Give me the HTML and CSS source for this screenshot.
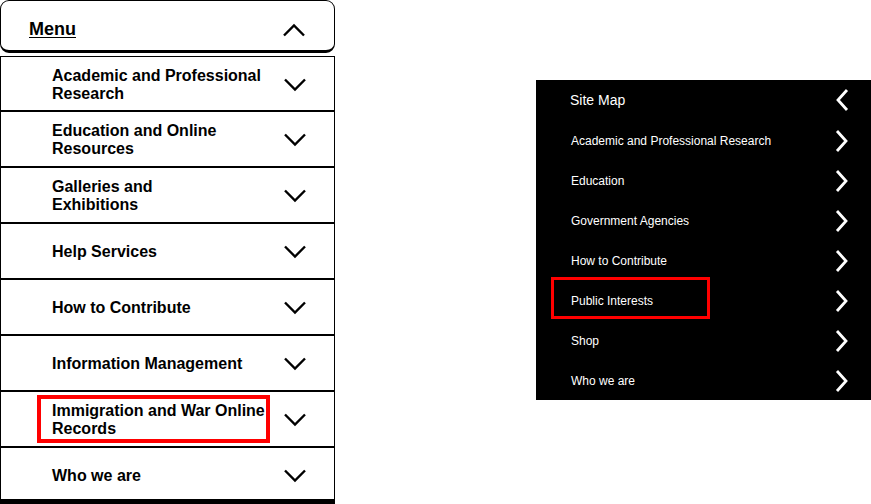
FILE: index.html
```html
<!DOCTYPE html>
<html>
<head>
<meta charset="utf-8">
<link rel="stylesheet" href="styles.css">
</head>
<body>
<div class="page">
  <div class="accordion">
    <div class="acc-head">
      <span class="acc-title">Menu</span>
      <svg class="chev" width="24" height="14" viewBox="0 0 24 14"><path d="M2 12.5 L12 2.5 L22 12.5" fill="none" stroke="#000" stroke-width="2.4"/></svg>
    </div>
    <ul class="acc-list">
      <li class="acc-row"><span class="acc-text">Academic and Professional Research</span><svg class="chev" width="24" height="14" viewBox="0 0 24 14"><path d="M2 1.5 L12 11.5 L22 1.5" fill="none" stroke="#000" stroke-width="2.4"/></svg></li>
      <li class="acc-row"><span class="acc-text">Education and Online Resources</span><svg class="chev" width="24" height="14" viewBox="0 0 24 14"><path d="M2 1.5 L12 11.5 L22 1.5" fill="none" stroke="#000" stroke-width="2.4"/></svg></li>
      <li class="acc-row"><span class="acc-text">Galleries and<br>Exhibitions</span><svg class="chev" width="24" height="14" viewBox="0 0 24 14"><path d="M2 1.5 L12 11.5 L22 1.5" fill="none" stroke="#000" stroke-width="2.4"/></svg></li>
      <li class="acc-row"><span class="acc-text">Help Services</span><svg class="chev" width="24" height="14" viewBox="0 0 24 14"><path d="M2 1.5 L12 11.5 L22 1.5" fill="none" stroke="#000" stroke-width="2.4"/></svg></li>
      <li class="acc-row"><span class="acc-text">How to Contribute</span><svg class="chev" width="24" height="14" viewBox="0 0 24 14"><path d="M2 1.5 L12 11.5 L22 1.5" fill="none" stroke="#000" stroke-width="2.4"/></svg></li>
      <li class="acc-row"><span class="acc-text">Information Management</span><svg class="chev" width="24" height="14" viewBox="0 0 24 14"><path d="M2 1.5 L12 11.5 L22 1.5" fill="none" stroke="#000" stroke-width="2.4"/></svg></li>
      <li class="acc-row"><span class="acc-text">Immigration and War Online Records<span class="hl hl-left"></span></span><svg class="chev" width="24" height="14" viewBox="0 0 24 14"><path d="M2 1.5 L12 11.5 L22 1.5" fill="none" stroke="#000" stroke-width="2.4"/></svg></li>
      <li class="acc-row acc-last"><span class="acc-text">Who we are</span><svg class="chev" width="24" height="14" viewBox="0 0 24 14"><path d="M2 1.5 L12 11.5 L22 1.5" fill="none" stroke="#000" stroke-width="2.4"/></svg></li>
    </ul>
  </div>

  <div class="sitemap">
    <div class="sm-row sm-head"><span>Site Map</span><svg class="rchev" width="16" height="24" viewBox="0 0 16 24"><path d="M13 2 L4 12 L13 22" fill="none" stroke="#fff" stroke-width="2.8"/></svg></div>
    <div class="sm-row"><span>Academic and Professional Research</span><svg class="rchev" width="16" height="24" viewBox="0 0 16 24"><path d="M3 2 L12 12 L3 22" fill="none" stroke="#fff" stroke-width="2.8"/></svg></div>
    <div class="sm-row"><span>Education</span><svg class="rchev" width="16" height="24" viewBox="0 0 16 24"><path d="M3 2 L12 12 L3 22" fill="none" stroke="#fff" stroke-width="2.8"/></svg></div>
    <div class="sm-row"><span>Government Agencies</span><svg class="rchev" width="16" height="24" viewBox="0 0 16 24"><path d="M3 2 L12 12 L3 22" fill="none" stroke="#fff" stroke-width="2.8"/></svg></div>
    <div class="sm-row"><span>How to Contribute</span><svg class="rchev" width="16" height="24" viewBox="0 0 16 24"><path d="M3 2 L12 12 L3 22" fill="none" stroke="#fff" stroke-width="2.8"/></svg></div>
    <div class="sm-row"><span class="sm-label">Public Interests<span class="hl hl-right"></span></span><svg class="rchev" width="16" height="24" viewBox="0 0 16 24"><path d="M3 2 L12 12 L3 22" fill="none" stroke="#fff" stroke-width="2.8"/></svg></div>
    <div class="sm-row"><span>Shop</span><svg class="rchev" width="16" height="24" viewBox="0 0 16 24"><path d="M3 2 L12 12 L3 22" fill="none" stroke="#fff" stroke-width="2.8"/></svg></div>
    <div class="sm-row"><span>Who we are</span><svg class="rchev" width="16" height="24" viewBox="0 0 16 24"><path d="M3 2 L12 12 L3 22" fill="none" stroke="#fff" stroke-width="2.8"/></svg></div>
  </div>
</div>
</body>
</html>
```

FILE: styles.css
```css
* { box-sizing: border-box; }
html, body { margin: 0; padding: 0; background: #fff; }
body { font-family: "Liberation Sans", Arial, Helvetica, sans-serif; color: #000; overflow: hidden; }

.page { display: flex; align-items: flex-start; width: 871px; height: 504px; }

.accordion { width: 335px; display: flex; flex-direction: column; gap: 3px; }

.acc-head {
  height: 53px;
  border: 1px solid #000;
  border-bottom: 3px solid #000;
  border-radius: 9px;
  display: flex;
  align-items: center;
  justify-content: space-between;
  padding: 6px 28px 0 28px;
}
.acc-title { font-weight: bold; font-size: 18px; text-decoration: underline; text-underline-offset: 2px; margin-top: 1px; }
.acc-head .chev { margin-top: 2px; }

.acc-list { list-style: none; margin: 0; padding: 0; border-left: 1px solid #000; border-right: 1px solid #000; border-top: 1px solid #000; }
.acc-row {
  height: 56px;
  border-bottom: 2px solid #000;
  display: flex;
  align-items: center;
  padding: 2px 27px 0 51px;
  font-weight: bold;
  font-size: 16px;
  line-height: 18px;
}
.acc-row:first-child { height: 55px; }
.acc-last { border-bottom: 5px solid #000; padding-top: 5px; }
.acc-text { flex: 1; max-width: 220px; position: relative; }
.acc-row .chev { margin-left: auto; }

.hl { position: absolute; border: 4px solid #f00; pointer-events: none; }
.hl-left { left: -15px; top: -7px; width: 233px; height: 48px; }

.sitemap {
  margin-left: 201px;
  margin-top: 80px;
  width: 335px;
  background: #000;
  color: #fff;
  display: flex;
  flex-direction: column;
}
.sm-row {
  height: 40px;
  display: flex;
  align-items: center;
  justify-content: space-between;
  padding: 1px 21px 0 35px;
  font-size: 12px;
}
.sm-head { font-size: 14px; padding-left: 34px; padding-top: 0; }
.sm-label { position: relative; }
.hl-right { border-width: 3px; left: -20px; top: -17px; width: 159px; height: 42px; }
```
